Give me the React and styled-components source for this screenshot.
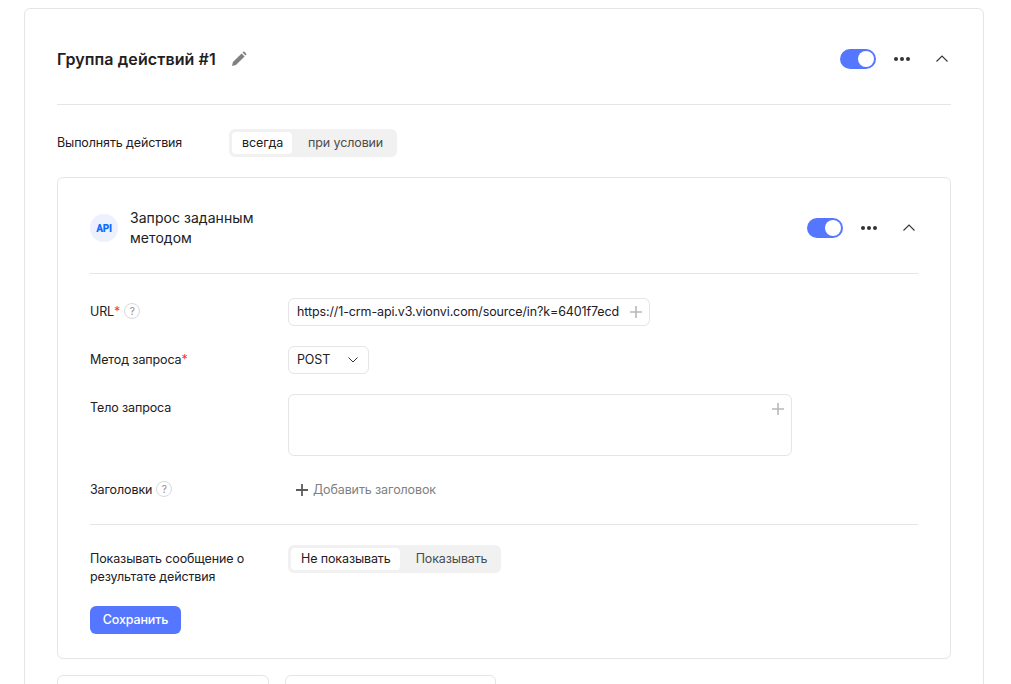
import React from "react";
import styled, { createGlobalStyle } from "styled-components";

const Global = createGlobalStyle`
  html, body { margin: 0; padding: 0; height: 684px; overflow: hidden; background: #fff; }
  body { font-family: Inter, "Noto Sans", sans-serif; font-size: 12.5px; letter-spacing: -0.12px; color: #21201f; }
  * { box-sizing: border-box; }
`;

const Page = styled.div`
  height: 684px;
  overflow: hidden;
  padding: 8px 0 0 24px;
`;
const OuterCard = styled.section`
  width: 960px;
  border: 1px solid #e5e5e5;
  border-radius: 6px;
  padding: 40px 32px 40px;
`;
const Header = styled.header`
  display: flex;
  align-items: center;
  height: 20px;
`;
const GroupTitle = styled.h2`
  margin: 0;
  font-size: 16px;
  font-weight: 600;
  line-height: 20px;
  letter-spacing: 0.1px;
`;
const EditButton = styled.span`
  display: flex;
  margin-left: 15px;
`;
const Controls = styled.div`
  display: flex;
  align-items: center;
  margin-left: auto;
  margin-right: 3px;
`;
const Toggle = styled.span`
  display: flex;
  align-items: center;
  justify-content: flex-end;
  width: 36px;
  height: 20px;
  padding: 2px;
  border-radius: 10px;
  background: #5577ff;
`;
const Knob = styled.span`
  width: 16px;
  height: 16px;
  border-radius: 50%;
  background: #fff;
`;
const IconSlot = styled.span`
  display: flex;
  margin-left: ${(p) => p.$gap}px;
  padding-bottom: ${(p) => p.$raise || 0}px;
`;
const Divider = styled.hr`
  margin: ${(p) => p.$before}px 0 ${(p) => p.$after}px;
  border: 0;
  border-top: 1px solid #e5e5e5;
`;
const ConditionRow = styled.div`
  display: grid;
  grid-template-columns: 172px auto;
  justify-content: start;
  align-items: center;
`;
const ConditionLabel = styled.span`
  padding-bottom: 2px;
`;
const Segmented = styled.div`
  display: inline-flex;
  height: 28px;
  padding: 3px;
  border-radius: 6px;
  background: #f1f1f1;
  justify-self: start;
`;
const Segment = styled.span`
  display: flex;
  align-items: center;
  padding: 0 ${(p) => p.$right}px 2px ${(p) => p.$left}px;
  border-radius: 4px;
  background: ${(p) => (p.$active ? "#fff" : "transparent")};
  color: ${(p) => (p.$active ? "#21201f" : "#4c4c4c")};
`;
const InnerCard = styled.section`
  width: 894px;
  margin-top: 20px;
  border: 1px solid #e5e5e5;
  border-radius: 6px;
  padding: 40px 32px 24px;
`;
const ActionHeader = styled.header`
  display: flex;
  align-items: center;
  height: 20px;
`;
const ApiBadge = styled.span`
  display: flex;
  align-items: center;
  justify-content: center;
  width: 28px;
  height: 28px;
  border-radius: 50%;
  background: #edf1fe;
  color: #0f6bff;
  font-family: Roboto, sans-serif;
  font-size: 10px;
  font-weight: 900;
  letter-spacing: -0.2px;
`;
const ActionTitle = styled.h3`
  width: 140px;
  margin: 0 0 0 12px;
  font-size: 14px;
  font-weight: 400;
  line-height: 20px;
  letter-spacing: 0.05px;
`;
const Form = styled.div`
  display: grid;
  grid-template-columns: 198px 1fr;
  row-gap: 20px;
`;
const Label = styled.div`
  display: flex;
  align-items: center;
  height: 26px;
  white-space: nowrap;
`;
const Required = styled.span`
  color: #ff3333;
`;
const Hint = styled.span`
  display: inline-flex;
  align-items: center;
  justify-content: center;
  width: 16px;
  height: 16px;
  margin-left: 4px;
  border: 1px solid #d9d9d9;
  border-radius: 50%;
  color: #8c8c8c;
  font-size: 10px;
`;
const Field = styled.div`
  display: flex;
  justify-content: space-between;
  align-items: ${(p) => (p.$tall ? "flex-start" : "center")};
  width: ${(p) => p.$w}px;
  height: ${(p) => (p.$tall ? 62 : 28)}px;
  padding: ${(p) => (p.$tall ? "8px 7px 8px 8px" : "0 7px 0 8px")};
  border: 1px solid #e5e5e5;
  border-radius: 6px;
  white-space: nowrap;
`;
const RaisedText = styled.span`
  padding-bottom: 2px;
`;
const AddLink = styled.div`
  display: flex;
  align-items: center;
  gap: 5px;
  height: 28px;
  padding-left: 8px;
  color: #808080;
`;
const ResultRow = styled.div`
  display: grid;
  grid-template-columns: 198px auto;
  justify-content: start;
`;
const ResultLabel = styled.div`
  padding-top: 5px;
  line-height: 18px;
`;
const SaveButton = styled.button`
  display: block;
  width: 91px;
  height: 28px;
  margin-top: 20px;
  padding: 0 0 2px;
  border: 0;
  border-radius: 6px;
  background: #5577ff;
  color: #fff;
  font: 500 12.5px Inter, sans-serif;
  letter-spacing: -0.12px;
`;
const StubRow = styled.div`
  display: flex;
  gap: 16px;
  margin-top: 16px;
`;
const StubCard = styled.div`
  width: ${(p) => p.$w}px;
  height: 60px;
  border: 1px solid #e5e5e5;
  border-radius: 6px;
`;
const ChevronDownIcon = styled.svg`
  margin-right: 3px;
`;
const PlusIcon = styled.svg`
  flex-shrink: 0;
`;

const Pencil = () => (
  <svg width="16" height="16" viewBox="0 0 16 16" fill="#808080">
    <path d="M1 15l.9-3.9L10.6 2.4l3 3-8.7 8.7L1 15z" />
    <path d="M11.5 1.5l.7-.6c.4-.4 1-.4 1.4 0l1.5 1.5c.4.4.4 1 0 1.4l-.6.7-3-3z" />
  </svg>
);
const Dots = () => (
  <svg width="16" height="4" viewBox="0 0 16 4" fill="#333">
    <circle cx="2" cy="2" r="2" />
    <circle cx="8" cy="2" r="2" />
    <circle cx="14" cy="2" r="2" />
  </svg>
);
const ChevronUp = () => (
  <svg width="12" height="7" viewBox="0 0 12 7" fill="none" stroke="#333" strokeWidth="1.1">
    <path d="M.5 6.5L6 1l5.5 5.5" />
  </svg>
);
const ChevronDown = () => (
  <ChevronDownIcon width="10" height="6" viewBox="0 0 10 6" fill="none" stroke="#333" strokeWidth="1">
    <path d="M.5.5L5 5 9.5.5" />
  </ChevronDownIcon>
);
const Plus = ({ color = "#b8b8b8", width = 1.6 }) => (
  <PlusIcon width="12" height="12" viewBox="0 0 12 12" stroke={color} strokeWidth={width}>
    <path d="M6 0v12M0 6h12" />
  </PlusIcon>
);
const ItemControls = () => (
  <Controls>
    <Toggle><Knob /></Toggle>
    <IconSlot $gap={18}><Dots /></IconSlot>
    <IconSlot $gap={26} $raise={2}><ChevronUp /></IconSlot>
  </Controls>
);

export default function App() {
  return (
    <Page>
      <Global />
      <OuterCard>
        <Header>
          <GroupTitle>Группа действий #1</GroupTitle>
          <EditButton><Pencil /></EditButton>
          <ItemControls />
        </Header>
        <Divider $before={35} $after={24} />
        <ConditionRow>
          <ConditionLabel>Выполнять действия</ConditionLabel>
          <Segmented>
            <Segment $active $left={10} $right={9}>всегда</Segment>
            <Segment $left={16} $right={11}>при условии</Segment>
          </Segmented>
        </ConditionRow>
        <InnerCard>
          <ActionHeader>
            <ApiBadge>API</ApiBadge>
            <ActionTitle>Запрос заданным методом</ActionTitle>
            <ItemControls />
          </ActionHeader>
          <Divider $before={35} $after={24} />
          <Form>
            <Label>URL<Required>*</Required><Hint>?</Hint></Label>
            <Field $w={362}>
              <RaisedText>https://1-crm-api.v3.vionvi.com/source/in?k=6401f7ecd</RaisedText>
              <Plus />
            </Field>
            <Label>Метод запроса<Required>*</Required></Label>
            <Field $w={81}><RaisedText>POST</RaisedText><ChevronDown /></Field>
            <Label>Тело запроса</Label>
            <Field $w={504} $tall>
              <span />
              <Plus />
            </Field>
            <Label>Заголовки<Hint>?</Hint></Label>
            <AddLink><Plus color="#5c5c5c" width={1.8} /><RaisedText>Добавить заголовок</RaisedText></AddLink>
          </Form>
          <Divider $before={20} $after={20} />
          <ResultRow>
            <ResultLabel>Показывать сообщение о<br />результате действия</ResultLabel>
            <Segmented>
              <Segment $active $left={10} $right={9}>Не показывать</Segment>
              <Segment $left={16} $right={11}>Показывать</Segment>
            </Segmented>
          </ResultRow>
          <SaveButton>Сохранить</SaveButton>
        </InnerCard>
        <StubRow>
          <StubCard $w={212} />
          <StubCard $w={211} />
        </StubRow>
      </OuterCard>
    </Page>
  );
}
